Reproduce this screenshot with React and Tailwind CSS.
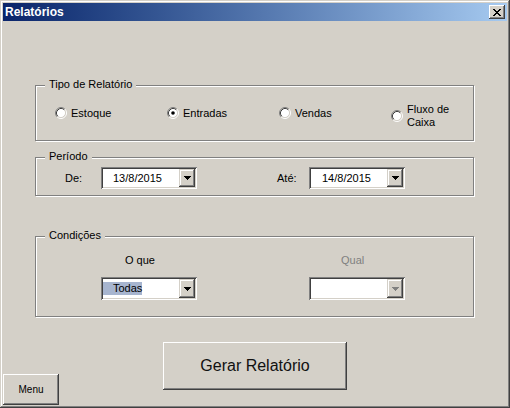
import React from 'react'

const raised =
  'shadow-[inset_-1px_-1px_0_#404040,inset_1px_1px_0_#fff,inset_-2px_-2px_0_#808080,inset_2px_2px_0_#d4d0c8]'
const sunken =
  'shadow-[inset_1px_1px_0_#808080,inset_-1px_-1px_0_#fff,inset_2px_2px_0_#404040,inset_-2px_-2px_0_#d4d0c8]'
const etched = 'border border-[#808080] shadow-[inset_1px_1px_0_#fff,1px_1px_0_#fff]'

function Radio({ checked }) {
  return (
    <svg width="12" height="12" viewBox="0 0 12 12" className="shrink-0">
      <circle cx="6" cy="6" r="4.5" fill="#fff" />
      <path d="M2.11 9.89A5.5 5.5 0 0 1 9.89 2.11" stroke="#808080" fill="none" />
      <path d="M9.89 2.11A5.5 5.5 0 0 1 2.11 9.89" stroke="#fff" fill="none" />
      <path d="M2.82 9.18A4.5 4.5 0 0 1 9.18 2.82" stroke="#404040" fill="none" />
      <path d="M9.18 2.82A4.5 4.5 0 0 1 2.82 9.18" stroke="#d4d0c8" fill="none" />
      {checked && <circle cx="6" cy="6" r="1.8" fill="#000" />}
    </svg>
  )
}

function Arrow({ color = '#000' }) {
  return (
    <svg width="7" height="4" viewBox="0 0 7 4" shapeRendering="crispEdges">
      <path d="M0 0h7v1h-1v1h-1v1h-1v1h-1v-1h-1v-1h-1v-1h-1z" fill={color} />
    </svg>
  )
}

function Combo({ value, selected, disabled, height = 'h-[22px]', pad = 'pl-[10px]' }) {
  return (
    <div className={`flex w-[96px] ${height} bg-white p-[2px] ${sunken}`}>
      <div className="flex flex-1 items-center text-[11px] leading-[13px] text-black">
        {selected ? (
          <span className={`bg-[#a7b5cf] ${pad}`}>{value}</span>
        ) : (
          <span className={pad}>{value}</span>
        )}
      </div>
      <div
        className={`flex w-[16px] items-center justify-center bg-[#d4d0c8] shadow-[inset_-1px_-1px_0_#404040,inset_1px_1px_0_#d4d0c8,inset_-2px_-2px_0_#808080,inset_2px_2px_0_#fff]`}
      >
        <Arrow color={disabled ? '#808080' : '#000'} />
      </div>
    </div>
  )
}

function Frame({ title, className, children }) {
  return (
    <div className={`relative ml-[32px] w-[439px] ${etched} ${className}`}>
      <span className="absolute -top-[8px] left-[9px] bg-[#d4d0c8] px-[4px] text-[11px] leading-[13px] text-black">
        {title}
      </span>
      {children}
    </div>
  )
}

export default function App() {
  const tipos = [
    { label: 'Estoque' },
    { label: 'Entradas', checked: true },
    { label: 'Vendas' },
    { label: 'Fluxo de\nCaixa' },
  ]

  return (
    <div className="h-[408px] w-[510px] bg-[#d4d0c8] p-[3px] font-['Liberation_Sans',Arial,sans-serif] shadow-[inset_-1px_-1px_0_#404040,inset_1px_1px_0_#d4d0c8,inset_-2px_-2px_0_#808080,inset_2px_2px_0_#fff]">
      {/* Title bar */}
      <div className="flex h-[18px] items-center justify-between bg-linear-to-r from-[#0a246a] to-[#a6caf0] pl-[2px] pr-[2px]">
        <span className="text-[12px] font-bold leading-[14px] text-white">Relatórios</span>
        <button className={`flex h-[14px] w-[16px] items-center justify-center bg-[#d4d0c8] ${raised}`}>
          <svg width="8" height="7" viewBox="0 0 8 7" shapeRendering="crispEdges">
            <path
              d="M0 0h2v1h1v1h2v-1h1v-1h2v1h-1v1h-1v1h-1v1h1v1h1v1h1v1h-2v-1h-1v-1h-2v1h-1v1h-2v-1h1v-1h1v-1h1v-1h-1v-1h-1v-1h-1z"
              fill="#000"
            />
          </svg>
        </button>
      </div>

      {/* Tipo de Relatório */}
      <Frame title="Tipo de Relatório" className="mt-[64px] h-[56px]">
        <div className="grid h-full grid-cols-[repeat(4,112px)] items-center pl-[19px]">
          {tipos.map((t, i) => (
            <div key={i} className={`flex items-center gap-[4px] ${i === 3 ? 'mt-[6px]' : ''}`}>
              <Radio checked={t.checked} />
              <span className="whitespace-pre text-[11px] leading-[13px] text-black">{t.label}</span>
            </div>
          ))}
        </div>
      </Frame>

      {/* Período */}
      <Frame title="Período" className="mt-[16px] h-[39px]">
        <div className="flex items-center pl-[29px] pt-[9px]">
          <span className="w-[36px] text-[11px] leading-[13px] text-black">De:</span>
          <Combo value="13/8/2015" />
          <span className="ml-[80px] w-[32px] text-[11px] leading-[13px] text-black">Até:</span>
          <Combo value="14/8/2015" pad="pl-[11px]" />
        </div>
      </Frame>

      {/* Condições */}
      <Frame title="Condições" className="mt-[40px] h-[81px]">
        <div className="flex pl-[65px] pt-[17px]">
          <div className="flex w-[96px] flex-col">
            <span className="pl-[24px] text-[11px] leading-[13px] text-black">O que</span>
            <div className="mt-[10px]">
              <Combo value="Todas" selected height="h-[23px]" />
            </div>
          </div>
          <div className="ml-[112px] flex w-[96px] flex-col">
            <span className="pl-[32px] text-[11px] leading-[13px] text-[#808080]">Qual</span>
            <div className="mt-[10px]">
              <Combo value="" disabled height="h-[23px]" />
            </div>
          </div>
        </div>
      </Frame>

      {/* Buttons */}
      <div className="mt-[25px] flex items-start">
        <button
          className={`mt-[32px] flex h-[31px] w-[56px] items-center justify-center bg-[#d4d0c8] text-[10px] text-black ${raised}`}
        >
          Menu
        </button>
        <button
          className={`ml-[104px] flex h-[48px] w-[184px] items-center justify-center bg-[#d4d0c8] text-[16px] text-[#111] ${raised}`}
        >
          Gerar Relatório
        </button>
      </div>
    </div>
  )
}
